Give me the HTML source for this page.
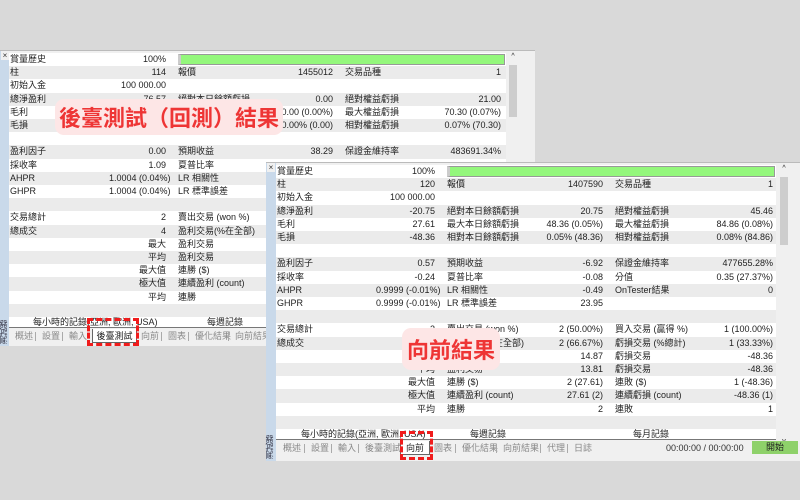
<!DOCTYPE html>
<html><head><meta charset="utf-8"><style>
*{margin:0;padding:0;box-sizing:border-box}
body{width:800px;height:500px;background:#d9d9d9;position:relative;overflow:hidden;font-family:"Liberation Sans","Noto Sans CJK TC",sans-serif;font-size:9px;color:#222}
.panel{position:absolute;background:#f0f0f0;border-top:1px solid #bbb}
.strip{position:absolute;left:0;top:0;bottom:0;background:#c9d9ea}
.strip .x{position:absolute;top:0;left:1px;font-size:8px;color:#333;background:#f0f0f0;width:8px;text-align:center}
.strip .vt{position:absolute;bottom:2px;left:0;width:9px;font-size:8px;line-height:8px;color:#334;writing-mode:vertical-rl;transform:rotate(180deg)}
table{position:absolute;border-collapse:collapse;table-layout:fixed}
td{height:13.2px;line-height:13.2px;white-space:nowrap;overflow:hidden;padding:0}
tr:nth-child(odd){background:#fff}
tr:nth-child(even){background:#ebebeb}
td.l{padding-left:1px}
td.v{text-align:right;padding-right:11px}
.bar{position:absolute;height:11px;background:#94f77c;border:1px solid #999;border-left:3px solid #ccc}
.sb{position:absolute;background:#f0f0f0}
.thumb{position:absolute;background:#cdcdcd}
.hdr{position:absolute;background:#fff;height:11px;font-size:9px;line-height:11px;border-bottom:1px solid #777}
.tabs{position:absolute;height:14px;font-size:9px;line-height:14px;color:#888}
.tabs span{position:absolute;top:0}
.tabs i{position:absolute;top:3px;width:1px;height:9px;background:#aaa}
.sel{position:absolute;background:#fff;border:1px solid #666;border-top:none;color:#222;text-align:center}
.call{position:absolute;background:#fde6e6;border-radius:9px;color:#ee3535;font-weight:bold;text-align:center;font-family:"Noto Sans CJK TC",sans-serif}
.dash{position:absolute;border:3px dashed #f01c1c}
</style></head><body>

<!-- Panel 1 -->
<div class="panel" style="left:0;top:50px;width:535px;height:296px">
 <div class="strip" style="width:9px"><div class="x">×</div><div class="vt">測試器</div></div>
 <table style="left:9px;top:2px;width:497px">
  <colgroup><col style="width:100px"><col style="width:68px"><col style="width:100px"><col style="width:67px"><col style="width:100px"><col style="width:62px"></colgroup>
  <tr><td class="l">賞量歷史</td><td class="v">100%</td><td colspan="4"></td></tr>
  <tr><td class="l">柱</td><td class="v">114</td><td class="l">報價</td><td class="v">1455012</td><td class="l">交易品種</td><td class="v" style="padding-right:5px">1</td></tr>
  <tr><td class="l">初始入金</td><td class="v">100 000.00</td><td></td><td></td><td></td><td></td></tr>
  <tr><td class="l">總淨盈利</td><td class="v">76.57</td><td class="l">絕對本日餘額虧損</td><td class="v">0.00</td><td class="l">絕對權益虧損</td><td class="v" style="padding-right:5px">21.00</td></tr>
  <tr><td class="l">毛利</td><td class="v">76.57</td><td class="l">最大本日餘額虧損</td><td class="v">0.00 (0.00%)</td><td class="l">最大權益虧損</td><td class="v" style="padding-right:5px">70.30 (0.07%)</td></tr>
  <tr><td class="l">毛損</td><td class="v">0.00</td><td class="l">相對本日餘額虧損</td><td class="v">0.00% (0.00)</td><td class="l">相對權益虧損</td><td class="v" style="padding-right:5px">0.07% (70.30)</td></tr>
  <tr><td colspan="6"></td></tr>
  <tr><td class="l">盈利因子</td><td class="v">0.00</td><td class="l">預期收益</td><td class="v">38.29</td><td class="l">保證金維持率</td><td class="v" style="padding-right:5px">483691.34%</td></tr>
  <tr><td class="l">採收率</td><td class="v">1.09</td><td class="l">夏普比率</td><td class="v"></td><td></td><td></td></tr>
  <tr><td class="l">AHPR</td><td class="v">1.0004 (0.04%)</td><td class="l">LR 相關性</td><td></td><td></td><td></td></tr>
  <tr><td class="l">GHPR</td><td class="v">1.0004 (0.04%)</td><td class="l">LR 標準誤差</td><td></td><td></td><td></td></tr>
  <tr><td colspan="6"></td></tr>
  <tr><td class="l">交易總計</td><td class="v">2</td><td class="l">賣出交易 (won %)</td><td></td><td></td><td></td></tr>
  <tr><td class="l">總成交</td><td class="v">4</td><td class="l">盈利交易(%在全部)</td><td></td><td></td><td></td></tr>
  <tr><td></td><td class="v">最大</td><td class="l">盈利交易</td><td></td><td></td><td></td></tr>
  <tr><td></td><td class="v">平均</td><td class="l">盈利交易</td><td></td><td></td><td></td></tr>
  <tr><td></td><td class="v">最大值</td><td class="l">連勝 ($)</td><td></td><td></td><td></td></tr>
  <tr><td></td><td class="v">極大值</td><td class="l">連續盈利 (count)</td><td></td><td></td><td></td></tr>
  <tr><td></td><td class="v">平均</td><td class="l">連勝</td><td></td><td></td><td></td></tr>
  <tr><td colspan="6"></td></tr>
 </table>
 <div class="bar" style="left:178px;top:3px;width:327px"></div>
 <div class="sb" style="left:507px;top:2px;width:12px;height:262px"><div style="font-size:7px;text-align:center">^</div><div class="thumb" style="left:2px;top:12px;width:8px;height:52px"></div></div>
 <div class="hdr" style="left:9px;top:266px;width:510px"><span style="position:absolute;left:24px">每小時的記錄(亞洲, 歐洲, USA)</span><span style="position:absolute;left:198px">每週記錄</span></div>
 <div class="tabs" style="left:9px;top:278px;width:520px">
  <span style="left:6px">概述</span><i style="left:26px"></i><span style="left:33px">設置</span><i style="left:53px"></i><span style="left:60px">輸入</span>
  <div class="sel" style="left:83px;top:0;width:45px;height:14px">後臺測試</div>
  <span style="left:132px">向前</span><i style="left:152px"></i><span style="left:159px">圖表</span><i style="left:179px"></i><span style="left:186px">優化結果</span><i style="left:219px"></i><span style="left:226px">向前結果</span>
 </div>
</div>

<!-- Panel 2 -->
<div class="panel" style="left:266px;top:162px;width:534px;height:299px">
 <div class="strip" style="width:10px"><div class="x">×</div><div class="vt">測試器</div></div>
 <table style="left:10px;top:2px;width:500px">
  <colgroup><col style="width:100px"><col style="width:70px"><col style="width:100px"><col style="width:68px"><col style="width:100px"><col style="width:62px"></colgroup>
  <tr><td class="l">賞量歷史</td><td class="v">100%</td><td colspan="4"></td></tr>
  <tr><td class="l">柱</td><td class="v">120</td><td class="l">報價</td><td class="v">1407590</td><td class="l">交易品種</td><td class="v" style="padding-right:3px">1</td></tr>
  <tr><td class="l">初始入金</td><td class="v">100 000.00</td><td></td><td></td><td></td><td></td></tr>
  <tr><td class="l">總淨盈利</td><td class="v">-20.75</td><td class="l">絕對本日餘額虧損</td><td class="v">20.75</td><td class="l">絕對權益虧損</td><td class="v" style="padding-right:3px">45.46</td></tr>
  <tr><td class="l">毛利</td><td class="v">27.61</td><td class="l">最大本日餘額虧損</td><td class="v">48.36 (0.05%)</td><td class="l">最大權益虧損</td><td class="v" style="padding-right:3px">84.86 (0.08%)</td></tr>
  <tr><td class="l">毛損</td><td class="v">-48.36</td><td class="l">相對本日餘額虧損</td><td class="v">0.05% (48.36)</td><td class="l">相對權益虧損</td><td class="v" style="padding-right:3px">0.08% (84.86)</td></tr>
  <tr><td colspan="6"></td></tr>
  <tr><td class="l">盈利因子</td><td class="v">0.57</td><td class="l">預期收益</td><td class="v">-6.92</td><td class="l">保證金維持率</td><td class="v" style="padding-right:3px">477655.28%</td></tr>
  <tr><td class="l">採收率</td><td class="v">-0.24</td><td class="l">夏普比率</td><td class="v">-0.08</td><td class="l">分值</td><td class="v" style="padding-right:3px">0.35 (27.37%)</td></tr>
  <tr><td class="l">AHPR</td><td class="v">0.9999 (-0.01%)</td><td class="l">LR 相關性</td><td class="v">-0.49</td><td class="l">OnTester結果</td><td class="v" style="padding-right:3px">0</td></tr>
  <tr><td class="l">GHPR</td><td class="v">0.9999 (-0.01%)</td><td class="l">LR 標準誤差</td><td class="v">23.95</td><td></td><td></td></tr>
  <tr><td colspan="6"></td></tr>
  <tr><td class="l">交易總計</td><td class="v">2</td><td class="l">賣出交易 (won %)</td><td class="v">2 (50.00%)</td><td class="l">買入交易 (贏得 %)</td><td class="v" style="padding-right:3px">1 (100.00%)</td></tr>
  <tr><td class="l">總成交</td><td class="v">4</td><td class="l">盈利交易(%在全部)</td><td class="v">2 (66.67%)</td><td class="l">虧損交易 (%總計)</td><td class="v" style="padding-right:3px">1 (33.33%)</td></tr>
  <tr><td></td><td class="v">最大</td><td class="l">盈利交易</td><td class="v">14.87</td><td class="l">虧損交易</td><td class="v" style="padding-right:3px">-48.36</td></tr>
  <tr><td></td><td class="v">平均</td><td class="l">盈利交易</td><td class="v">13.81</td><td class="l">虧損交易</td><td class="v" style="padding-right:3px">-48.36</td></tr>
  <tr><td></td><td class="v">最大值</td><td class="l">連勝 ($)</td><td class="v">2 (27.61)</td><td class="l">連敗 ($)</td><td class="v" style="padding-right:3px">1 (-48.36)</td></tr>
  <tr><td></td><td class="v">極大值</td><td class="l">連續盈利 (count)</td><td class="v">27.61 (2)</td><td class="l">連續虧損 (count)</td><td class="v" style="padding-right:3px">-48.36 (1)</td></tr>
  <tr><td></td><td class="v">平均</td><td class="l">連勝</td><td class="v">2</td><td class="l">連敗</td><td class="v" style="padding-right:3px">1</td></tr>
  <tr><td colspan="6"></td></tr>
 </table>
 <div class="bar" style="left:181px;top:3px;width:328px"></div>
 <div class="sb" style="left:511px;top:2px;width:14px;height:280px"><div style="font-size:7px;text-align:center">^</div><div class="thumb" style="left:3px;top:12px;width:8px;height:68px"></div><div style="position:absolute;bottom:0;width:14px;font-size:7px;text-align:center">v</div></div>
 <div class="hdr" style="left:10px;top:266px;width:500px"><span style="position:absolute;left:25px">每小時的記錄(亞洲, 歐洲, USA)</span><span style="position:absolute;left:194px">每週記錄</span><span style="position:absolute;left:357px">每月記錄</span></div>
 <div class="tabs" style="left:10px;top:278px;width:520px">
  <span style="left:7px">概述</span><i style="left:28px"></i><span style="left:35px">設置</span><i style="left:55px"></i><span style="left:62px">輸入</span><i style="left:82px"></i><span style="left:89px">後臺測試</span>
  <div class="sel" style="left:124px;top:0;width:30px;height:14px">向前</div>
  <span style="left:158px">圖表</span><i style="left:179px"></i><span style="left:186px">優化結果</span><i style="left:220px"></i><span style="left:227px">向前結果</span><i style="left:264px"></i><span style="left:271px">代理</span><i style="left:291px"></i><span style="left:298px">日誌</span>
  <span style="left:390px;color:#333">00:00:00 / 00:00:00</span>
  <div style="position:absolute;left:476px;top:0;width:46px;height:13px;background:#8ed16a;color:#222;text-align:center;line-height:13px">開始</div>
 </div>
</div>

<!-- Callouts -->
<div class="call" style="left:55px;top:99px;width:228px;height:36px;font-size:22px;line-height:36px">後臺測試（回測）結果</div>
<div class="call" style="left:402px;top:328px;width:98px;height:42px;font-size:22px;line-height:42px">向前結果</div>
<div class="dash" style="left:87px;top:318px;width:52px;height:28px"></div>
<div class="dash" style="left:400px;top:431px;width:33px;height:29px"></div>
</body></html>
